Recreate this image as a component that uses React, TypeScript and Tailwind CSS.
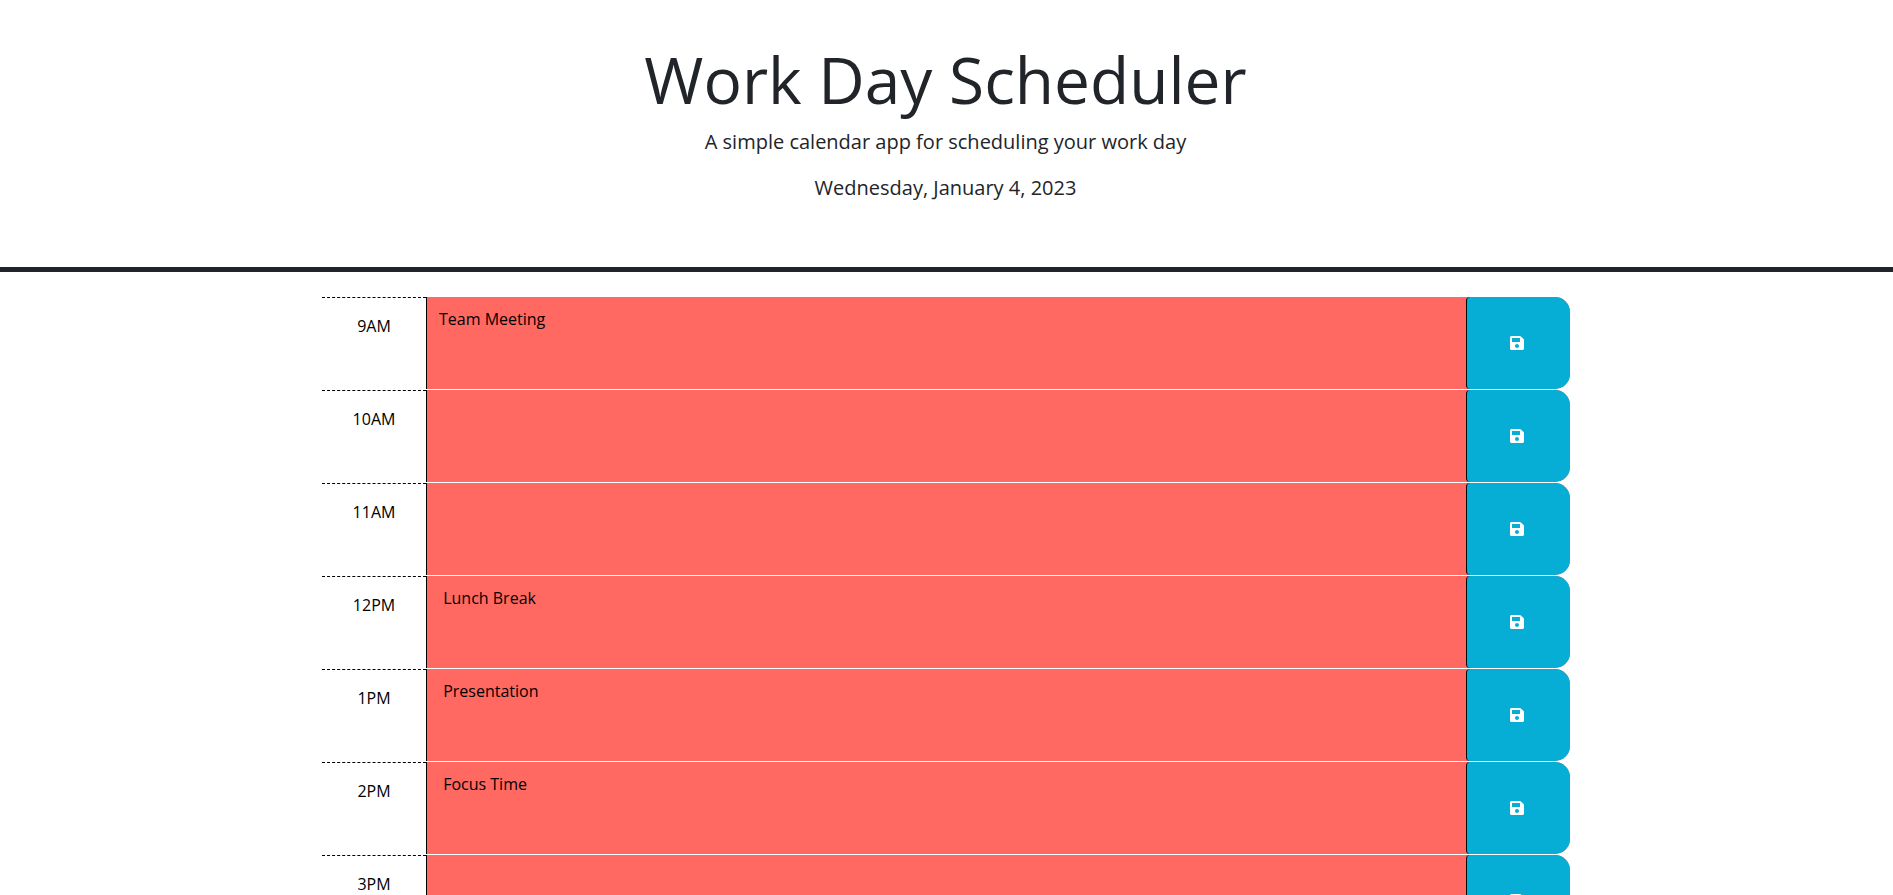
type Slot = { hour: string; text: string };

const slots: Slot[] = [
  { hour: "9AM", text: "Team Meeting" },
  { hour: "10AM", text: "" },
  { hour: "11AM", text: "" },
  { hour: "12PM", text: " Lunch Break" },
  { hour: "1PM", text: " Presentation" },
  { hour: "2PM", text: " Focus Time" },
  { hour: "3PM", text: "" },
];

function SaveIcon() {
  return (
    <svg viewBox="0 0 448 512" className="h-4 w-[14px]" fill="currentColor" aria-hidden="true">
      <path d="M433.941 129.941l-83.882-83.882A48 48 0 0 0 316.118 32H48C21.490 32 0 53.490 0 80v352c0 26.510 21.490 48 48 48h352c26.510 0 48-21.490 48-48V163.882a48 48 0 0 0-14.059-33.941zM224 416c-35.346 0-64-28.654-64-64 0-35.346 28.654-64 64-64s64 28.654 64 64c0 35.346-28.654 64-64 64zm96-304.520V212c0 6.627-5.373 12-12 12H76c-6.627 0-12-5.373-12-12V108c0-6.627 5.373-12 12-12h228.520c3.183 0 6.235 1.264 8.485 3.515l3.480 3.480A11.996 11.996 0 0 1 320 111.480z" />
    </svg>
  );
}

function TimeBlock({ hour, text }: Slot) {
  const id = `hour-${hour}`;
  return (
    <div className="mb-px grid h-[92px] grid-cols-12 rounded-[15px] bg-[#ff6961]">
      <label htmlFor={id} className="border-t border-dashed border-black bg-white py-4 text-center">
        {hour}
      </label>
      <textarea
        id={id}
        defaultValue={text}
        className="col-span-10 block resize-none border-l border-black bg-[#ff6961] px-3 py-[10px] text-black outline-none"
      />
      <button
        type="button"
        aria-label={`Save ${hour}`}
        className="flex items-center justify-center rounded-l rounded-r-[15px] border-l border-black bg-[#06aed5] pr-[3px] text-white"
      >
        <SaveIcon />
      </button>
    </div>
  );
}

export default function App() {
  return (
    <div className="h-screen overflow-hidden bg-white font-['Open_Sans',sans-serif] text-base text-black">
      <header className="mb-[25px] border-b-[5px] border-[#212529] pt-11 pr-[50px] pb-12 pl-12 text-center text-[#212529]">
        <h1 className="mb-3 text-[64px] leading-[71px]">Work Day Scheduler</h1>
        <p className="mb-4 text-xl leading-[30px]">A simple calendar app for scheduling your work day</p>
        <p className="mb-4 text-xl leading-[30px]">Wednesday, January 4, 2023</p>
      </header>
      <main className="mx-auto max-w-[1249px] pr-px">
        {slots.map((slot) => (
          <TimeBlock key={slot.hour} {...slot} />
        ))}
      </main>
    </div>
  );
}
